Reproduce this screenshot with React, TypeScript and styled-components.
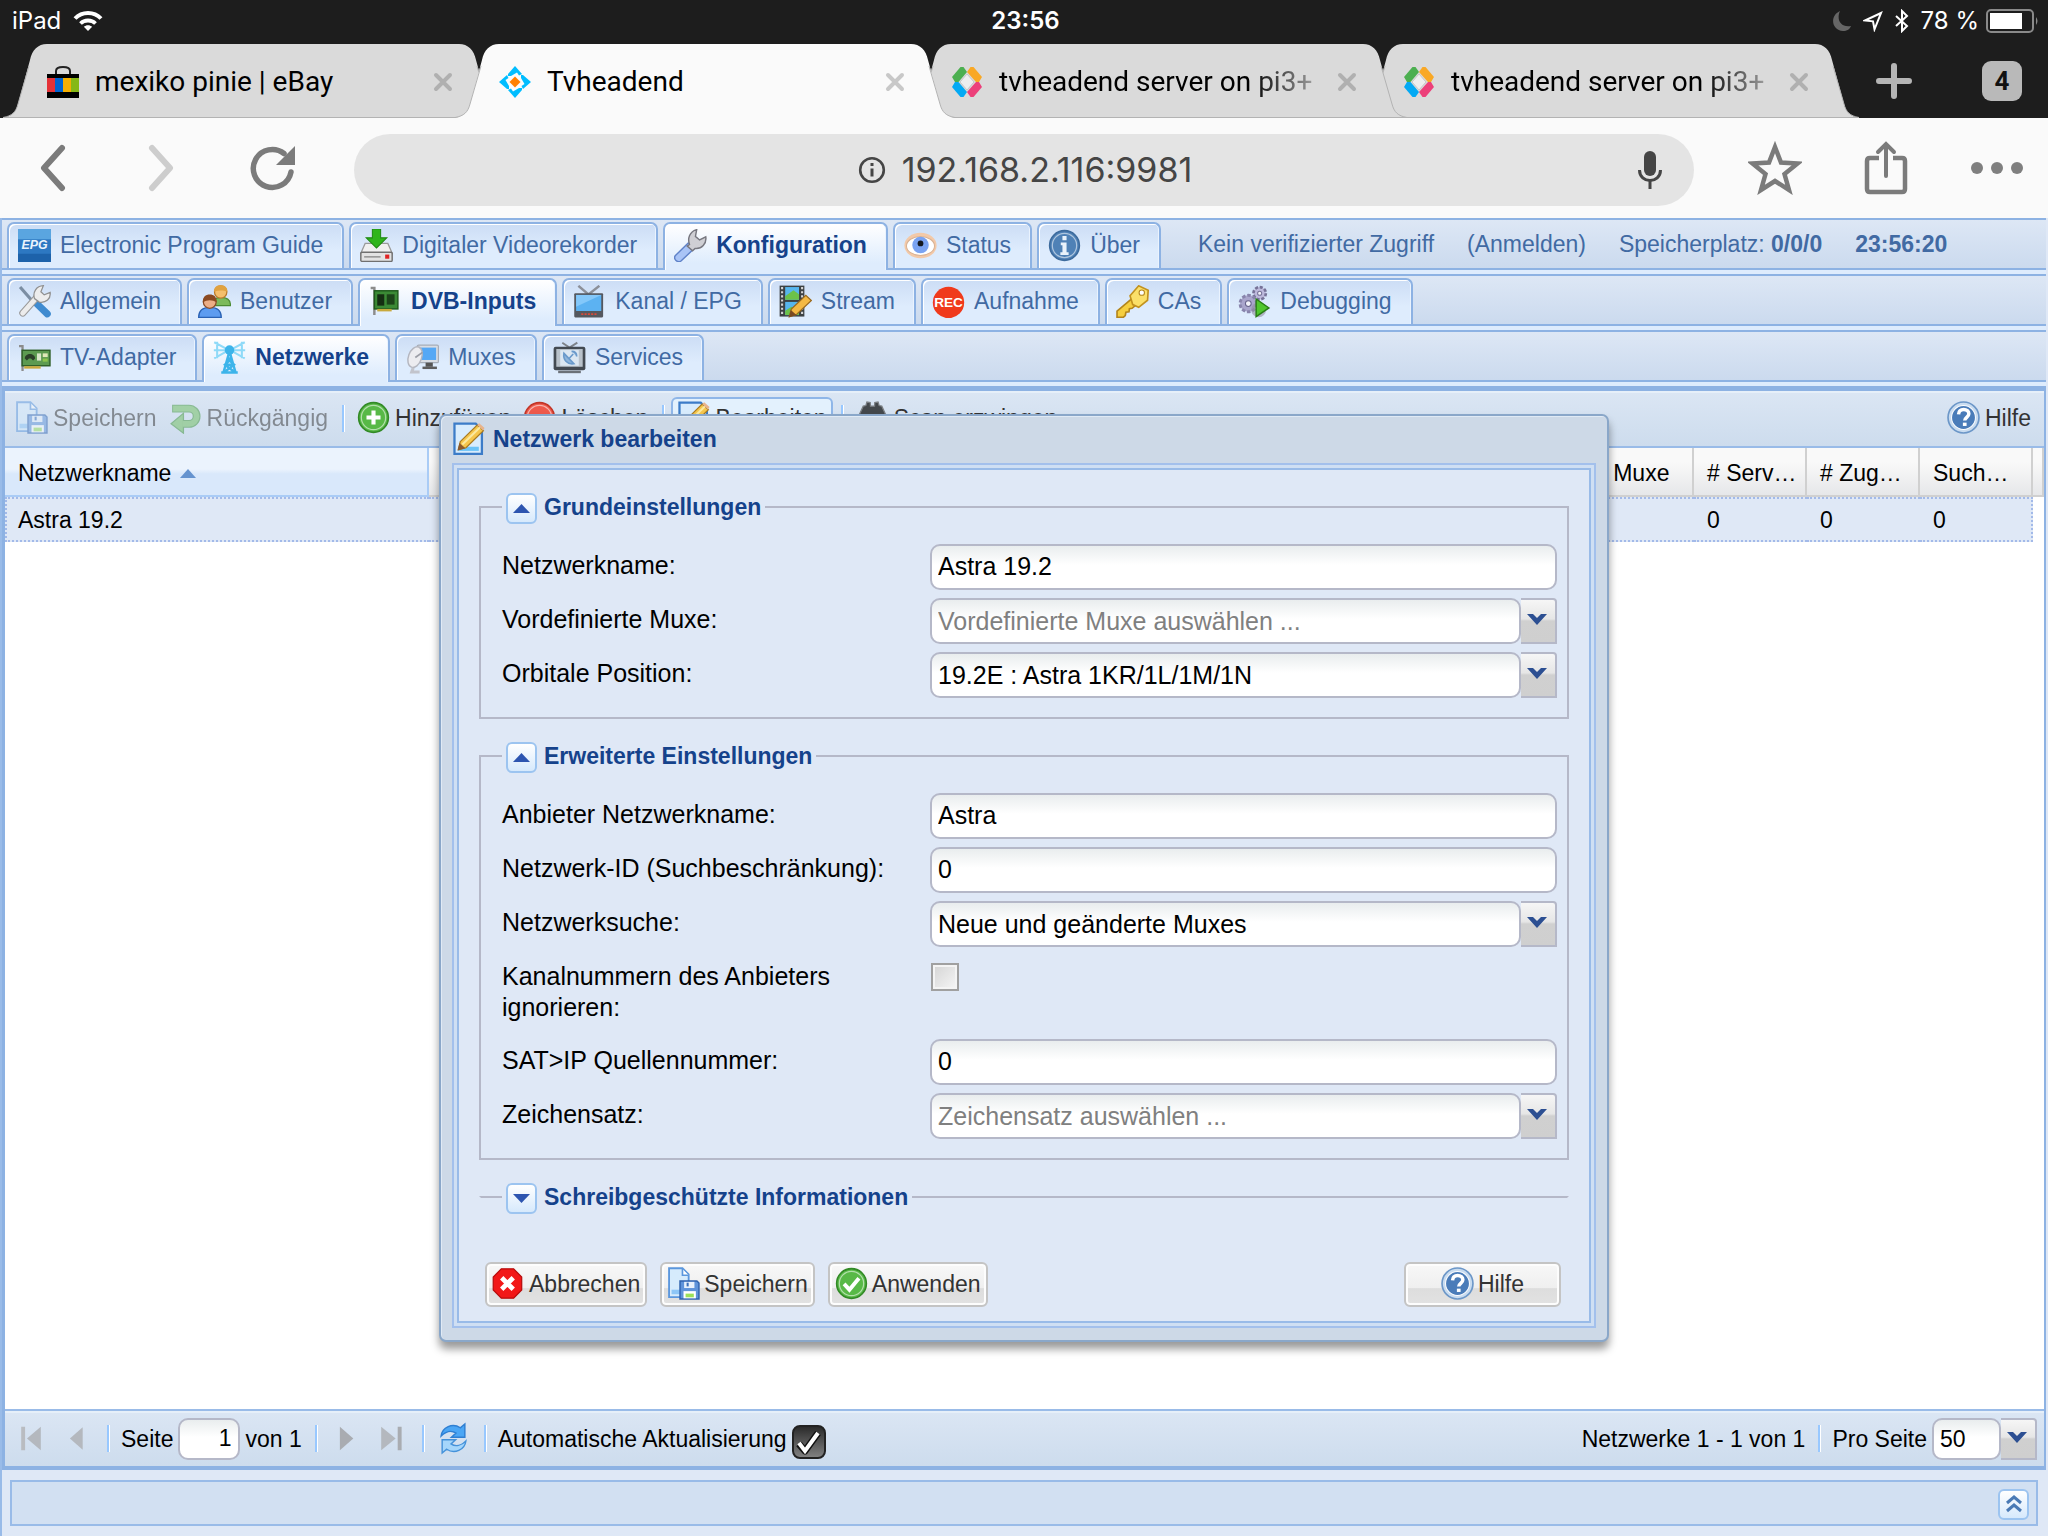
import React, { ReactNode, useId, useState } from "react";
import styled, { createGlobalStyle, css } from "styled-components";

const line = "#8db2e3";
const softLine = "#99bbe8";
const fieldLine = "#b5b8c8";
const navy = "#15428b";

const GlobalStyle = createGlobalStyle`
  *, *::before, *::after { box-sizing: border-box; }
  html, body, #root { height: 100%; }
  body {
    margin: 0;
    background: #dfe8f6;
    color: #000;
    font: 23px/28px "Liberation Sans", Arial, sans-serif;
  }
  button, input, select { font: inherit; color: inherit; margin: 0; }
  button { cursor: pointer; }
  svg { display: block; flex: none; }
`;

/* ---------- icons ---------- */

const disc = (fill: string, ring: string, inner: ReactNode) => (
  <>
    <circle cx="8" cy="8" r="7.2" fill={fill} stroke={ring} strokeWidth="0.8" />
    <circle cx="8" cy="8" r="5.9" fill="none" stroke="#fff" strokeOpacity="0.55" strokeWidth="0.6" />
    {inner}
  </>
);

const floppyPage = (
  <>
    <path d="M1 .6h6.500l3 3v11H1z" fill="#d6ebfc" stroke="#5b97dd" strokeWidth="0.9" />
    <path d="M7.5 1v3h3" fill="#fff" stroke="#5b97dd" strokeWidth="0.8" />
    <path d="M2.2 11h4v2.2h-4z" fill="#8dc6f7" />
    <path d="M6.3 6.8h8.2l1 1v7.7H6.3z" fill="#5f93da" stroke="#2f62ae" strokeWidth="0.7" />
    <path d="M8.3 7.2h5v3h-5z" fill="#e8f1fc" />
    <path d="M9.5 7.6h1v1.8h-1z" fill="#3b6fba" />
    <path d="M8 11.7h6v3.5H8z" fill="#fff" />
    <path d="M9 12.9h4v1.8H9z" fill="#9be05a" />
  </>
);

const pencilPage = (
  <>
    <path d="M1.2 .8h10.300l3 3v11.600H1.200z" fill="#d8ecfd" stroke="#3c7cc8" strokeWidth="1.1" />
    <path d="M3 12h10v2H3z" fill="#6bc3f7" />
    <path d="M4 9.500L12.200 1.500l3 2.700-8.400 8.300-3.600.9z" fill="#f5c64c" stroke="#a87a22" strokeWidth="0.6" />
    <path d="M5 10.900l8.600-8.400" stroke="#fbe9a0" strokeWidth="1" />
    <path d="M2.600 13.800l1-3.600 2.900 2.500z" fill="#8c5a2c" />
    <path d="M12.200 1.500l1-.9 2.600 2.300-.8 1.200z" fill="#e8b48c" />
  </>
);

const art: Record<string, ReactNode> = {
  epg: (
    <>
      <rect width="16" height="16" rx="0.8" fill="#2d78c2" />
      <rect y="0" width="16" height="5" fill="#5aa5e0" />
      <rect y="12" width="16" height="4" fill="#1d62aa" />
      <text x="8" y="9.600" textAnchor="middle" fontSize="6" fontWeight="700" fontStyle="italic" fill="#eaf4fd">EPG</text>
    </>
  ),
  record: (
    <>
      <path d="M2.500 7h11l2.200 5H.3z" fill="#f0f0f0" stroke="#9a9a9a" strokeWidth="0.6" />
      <rect x="0.4" y="11.3" width="15.2" height="4.4" rx="0.6" fill="#e2e2e2" stroke="#707070" strokeWidth="0.7" />
      <path d="M2 13.5h8" stroke="#999" strokeWidth="0.8" />
      <rect x="12.2" y="12.4" width="2" height="2" fill="#e02222" />
      <path d="M6 0h4v4.300h3L8 9.200 3 4.300h3z" fill="#2fb51b" stroke="#1f8a12" strokeWidth="0.5" />
    </>
  ),
  wrench: (
    <>
      <path d="M.7 12.800l6.200-6 2.900 2.700-6.400 6c-1.600 1.200-4-1-2.700-2.700z" fill="#a9c4f6" stroke="#5f82c8" strokeWidth="0.7" />
      <path d="M7.500 7.500c-1-2.900 0-6.200 3.500-7.200l-.6 3.300 2 1.700 3-1.500c.5 3.300-2 6-5.200 5.600l-1.200 1.200-2.600-2.300z" fill="#cfcfd4" stroke="#77777f" strokeWidth="0.7" />
    </>
  ),
  eye: (
    <>
      <ellipse cx="8" cy="8" rx="7.800" ry="6.200" fill="#f3c9a8" />
      <ellipse cx="8" cy="8.200" rx="6.800" ry="4.600" fill="#fff" stroke="#d9b294" strokeWidth="0.5" />
      <circle cx="8" cy="7.800" r="4" fill="#7aa3f2" />
      <circle cx="8" cy="7" r="1.400" fill="#14181f" />
    </>
  ),
  about: disc("#4f81b6", "#3d6b9d", <path d="M7 3.400h2v2H7zM6.200 6.600H9v4.700h1v1.300H6v-1.300h1V7.900h-.8z" fill="#e9f2fb" />),
  tools: (
    <>
      <path d="M1 1l7 8" stroke="#7b8ea3" strokeWidth="1.500" />
      <path d="M9 9l5.200 5" stroke="#3f8bd0" strokeWidth="3.400" strokeLinecap="round" />
      <path d="M2.300 13.600l7-7.800" stroke="#9a9a9a" strokeWidth="3.400" strokeLinecap="round" />
      <path d="M2.300 13.600l7-7.800" stroke="#ececec" strokeWidth="2.400" strokeLinecap="round" />
      <path d="M8 6.600C7 3.400 8.900.5 12.300.3l-1.200 3 1.600 1.500 2.900-1.200c.4 3-2 5.200-5.300 4.700z" fill="#ededed" stroke="#909090" strokeWidth="0.6" />
    </>
  ),
  users: (
    <>
      <path d="M6.800 10c0-2.700 1.500-4 4.400-4s4.600 1.300 4.600 4z" fill="#7cba5c" stroke="#4c8b34" strokeWidth="0.5" />
      <circle cx="11" cy="3.400" r="3" fill="#f4bf6c" stroke="#b9792a" strokeWidth="0.6" />
      <path d="M7.700 3.300C7.700 1 9.100.1 11 .1s3.300.9 3.300 3.200c-2-.9-4.500-.9-6.600 0z" fill="#e0a240" />
      <path d="M.3 15.700c0-3.500 2-4.900 5.500-4.900s5.500 1.400 5.500 4.900z" fill="#5d9cf0" stroke="#2a62b4" strokeWidth="0.6" />
      <circle cx="5.700" cy="8.200" r="3.100" fill="#ecae86" stroke="#8a4b25" strokeWidth="0.6" />
      <path d="M2.300 8.400c0-2.700 1.400-3.800 3.400-3.800s3.400 1.100 3.400 3.800c-2.200-1.300-4.600-1.300-6.800 0z" fill="#8b4a21" />
    </>
  ),
  card: (
    <>
      <path d="M.8 1.500h1.800v13" fill="none" stroke="#8c8c8c" strokeWidth="1.200" />
      <rect x="2.600" y="2.800" width="11.400" height="8.800" fill="#3b8a35" stroke="#1f5a1c" strokeWidth="0.7" />
      <rect x="4" y="4.500" width="3.400" height="5.500" fill="#152e12" />
      <rect x="8.600" y="4.500" width="3.800" height="5" fill="#1c4419" />
      <path d="M4 12.200h7" stroke="#c8a93c" strokeWidth="1.200" />
    </>
  ),
  tvcard: (
    <>
      <path d="M.5 2.500h1.700v12" fill="none" stroke="#8c8c8c" strokeWidth="1.100" />
      <rect x="2" y="4.500" width="13.500" height="7.500" fill="#5c9a50" stroke="#2f5f28" strokeWidth="0.700" />
      <path d="M3.300 8.500c0-3 5-3 5 0l-1 1-1-1h-1l-1 1z" fill="#2b3f28" />
      <rect x="9.200" y="6" width="2" height="3.500" fill="#d8e6c8" />
      <rect x="12" y="6" width="2.400" height="1.800" fill="#dfe8b8" />
      <rect x="12" y="8.500" width="2.400" height="1.500" fill="#8cc44c" />
      <path d="M3 12.800h8" stroke="#c8a93c" strokeWidth="1.200" />
    </>
  ),
  tv: (
    <>
      <path d="M2.600.4L7.500 4.600 12.800.4" fill="none" stroke="#8c9099" strokeWidth="1.200" />
      <rect x=".6" y="4" width="14" height="11.700" rx="0.500" fill="#55585f" />
      <rect x="1.500" y="4.800" width="12.200" height="7.800" fill="#5cb2f2" />
      <path d="M1.500 4.800h12.200L1.500 10.500z" fill="#84c8fa" />
      <path d="M4 14.100h8" stroke="#d84a3a" strokeWidth="0.900" strokeDasharray="1 .6" />
    </>
  ),
  film: (
    <>
      <rect x=".3" y=".3" width="12" height="15" fill="#3d4244" />
      <path d="M1.500 1v14M11.200 1v14" stroke="#d7d7d7" strokeWidth="1" strokeDasharray="1 1" />
      <rect x="3" y="1" width="6.700" height="6.200" fill="#57b6ee" />
      <rect x="3" y="8.200" width="6.700" height="6.400" fill="#57b6ee" />
      <path d="M3 5.500l4-3 2.700 2v2.700H3zM3 12.500l3-2 3.700 2v2.100H3z" fill="#6cc24a" />
      <path d="M6 11.600L13 5l2.700 2.500-7.100 6.700-3.600 1.200z" fill="#f4b944" stroke="#9a6a1f" strokeWidth="0.600" />
      <path d="M4.800 15.600l.9-3.500 2.800 2.500z" fill="#7a4a22" />
    </>
  ),
  rec: (
    <>
      <circle cx="8" cy="8.500" r="7.600" fill="#f03a1c" />
      <text x="8" y="10.900" textAnchor="middle" fontSize="6.600" fontWeight="700" fill="#fff">REC</text>
    </>
  ),
  key: (
    <>
      <path d="M8 6.400l2.600 2.600-2.800 2.300-1.300.2-.2 1.500-1.500.2-.3 1.600-1 .9H.5v-3z" fill="#f6cf3f" stroke="#b3851c" strokeWidth="0.800" />
      <path d="M6.800 5.200L11 .4l4.600 2.200-.3 4.800-4.300 3.400-2.900-1.300z" fill="#fbe069" stroke="#c2921f" strokeWidth="0.800" />
      <circle cx="12.500" cy="3.700" r="1.300" fill="#fff" stroke="#b3851c" strokeWidth="0.500" />
    </>
  ),
  gears: (
    <>
      <circle cx="10.500" cy="4" r="3" fill="#bdb9dc" stroke="#777398" strokeWidth="1.300" strokeDasharray="1.500 .8" />
      <circle cx="10.500" cy="4" r="1" fill="#f2f2fa" stroke="#777398" strokeWidth="0.500" />
      <circle cx="5" cy="9" r="4" fill="#a9a5cc" stroke="#8884ac" strokeWidth="1.400" strokeDasharray="1.700 .9" />
      <circle cx="5" cy="9" r="1.400" fill="#f2f2fa" stroke="#66628a" strokeWidth="0.500" />
      <circle cx="10" cy="12" r="3.600" fill="#8f8c9e" opacity="0.600" />
      <path d="M8.800 6.800l6.200 4.300-6.200 4.200z" fill="#4fc62d" stroke="#2a7d16" strokeWidth="0.700" />
    </>
  ),
  mast: (
    <>
      <path d="M.6.600l6 3.200M.4 4.500h6M.6 8.400l6-3.400M2 .4v8M15.400.600l-6 3.200M15.600 4.500h-6M15.400 8.400l-6-3.400M14 .4v8" fill="none" stroke="#8fdaf8" strokeWidth="1" />
      <path d="M8 5L5 15.500M8 5l3 10.500M6.800 8.500h2.600M6.200 11.500h3.800M4 15.300h8M7 8.500l3.200 3-4.800 3.700M9 8.500l-3.200 3 4.800 3.700" fill="none" stroke="#3cb4ea" strokeWidth="1.200" />
      <circle cx="8" cy="4.400" r="2.300" fill="#3cb4ea" />
    </>
  ),
  dish: (
    <>
      <rect x="5.500" y="2" width="10.200" height="8.500" rx="0.600" fill="#d9dde3" stroke="#a6adb8" strokeWidth="0.600" />
      <rect x="7" y="3.200" width="7.600" height="6" fill="#55a8f5" />
      <path d="M9.500 10.500h3.500v2H9.500z" fill="#555" />
      <path d="M8 13h7" stroke="#5d5d5d" strokeWidth="1.200" />
      <ellipse cx="4.400" cy="7.800" rx="3.200" ry="5.200" transform="rotate(20 4.400 7.800)" fill="#ececf0" stroke="#b4b6bf" strokeWidth="0.700" />
      <path d="M4.500 8l3.500-2.500" stroke="#9b9da6" strokeWidth="0.800" />
      <path d="M3.500 13l-.7 2h3.800" fill="none" stroke="#c2c4cc" strokeWidth="1.500" />
    </>
  ),
  satset: (
    <>
      <path d="M4.500.8L8 3.200l3.800-2.400" fill="none" stroke="#7d8289" strokeWidth="0.900" />
      <rect x=".3" y="2.800" width="15.400" height="11.400" rx="1" fill="#434a52" />
      <rect x="1.600" y="3.900" width="12.800" height="8.600" fill="#b9c2cb" />
      <rect x="3.500" y="4.400" width="9" height="7.600" fill="#dbe7f2" />
      <path d="M5.300 6c-.5 3 1.500 5.500 4.800 5zM7.800 8.500l2-2.200M9 5c1.500 0 2.500 1 2.500 2.500" fill="#8eb5dc" stroke="#6a9acb" strokeWidth="0.800" />
      <path d="M2.500 15h11" stroke="#6b7178" strokeWidth="1.200" />
    </>
  ),
  save: floppyPage,
  undo: (
    <>
      <path d="M1.500 3.700h8.200a3.700 3.700 0 0 1 0 7.400H6.500" fill="none" stroke="#3e9338" strokeWidth="3.800" />
      <path d="M7 6v9.600L1 11z" fill="#6fbf5d" stroke="#3e9338" strokeWidth="0.600" />
      <path d="M2 3.700h7.700a3.700 3.700 0 0 1 0 7.400H6.500" fill="none" stroke="#6fbf5d" strokeWidth="2.700" />
    </>
  ),
  add: disc("#58b947", "#328a26", <path d="M7 4.600h2V7h2.400v2H9v2.400H7V9H4.600V7H7z" fill="#fff" />),
  remove: disc("#ee5a4c", "#c23527", <path d="M4.200 7h7.600v2H4.200z" fill="#fff" />),
  edit: pencilPage,
  scan: (
    <path d="M1 15V8l2.500-5.500 1.300-.3.500-1.700 1.600.2.100 1.800h2L9.100.7l1.600-.2.500 1.700 1.300.3L15 8v7h-5V9H6v6z" fill="#44484c" stroke="#7b7f83" strokeWidth="0.600" />
  ),
  help: (
    <>
      <circle cx="8" cy="8" r="7.500" fill="#c9dcf0" stroke="#6c97c8" strokeWidth="0.800" />
      <circle cx="8" cy="8" r="5.800" fill="#4a7cb9" stroke="#fff" strokeWidth="0.500" />
      <path d="M5.600 6.500C5.700 4.900 6.700 4.100 8.100 4.100c1.400 0 2.500.8 2.500 2.100 0 1.700-2 1.800-2 3.300" fill="none" stroke="#fff" strokeWidth="1.700" />
      <rect x="7.700" y="10.500" width="1.800" height="1.600" fill="#fff" />
    </>
  ),
  cancel: (
    <>
      <path d="M4.500.9h6l3.900 4v6.200l-3.900 4h-6l-3.900-4V4.900z" fill="#f21818" stroke="#b80d0d" strokeWidth="0.600" />
      <path d="M4.700 5.200l5.600 5.600M10.300 5.200l-5.600 5.600" stroke="#fff" strokeWidth="2.300" />
    </>
  ),
  apply: disc("#58b947", "#328a26", <path d="M4.400 8.200l2.600 2.800 4.600-5.500" fill="none" stroke="#fff" strokeWidth="1.900" />),
  first: (
    <>
      <rect x="3" y="2.300" width="1.900" height="11.400" fill="#b9bcc1" />
      <path d="M12.500 2.300v11.400L5.800 8z" fill="#b4b8be" />
    </>
  ),
  prev: <path d="M11 2.500v11L4.800 8z" fill="#b4b8be" />,
  next: <path d="M4.800 2.300v11.400L11.300 8z" fill="#a9acb1" />,
  last: (
    <>
      <path d="M3 2.300v11.400L10 8z" fill="#b4b8be" />
      <rect x="11" y="2.300" width="1.900" height="11.400" fill="#a9acb1" />
    </>
  ),
  refresh: (
    <>
      <path d="M2 6.800C2.500 2.500 7.500.2 11.300 2.800L13.500 1v6.400H7l2.200-2C7 3.800 4.200 4.600 2 6.800z" fill="#4aa6f5" stroke="#2f7fd2" strokeWidth="0.700" />
      <path d="M14 9.200c-.5 4.300-5.500 6.600-9.300 4L2.500 15V8.600H9l-2.200 2c2.200 1.600 5 .8 7.200-1.400z" fill="#a5d6fb" stroke="#4592da" strokeWidth="0.700" />
    </>
  ),
};

const Icon = ({ name, size = 33 }: { name: string; size?: number }) => (
  <svg width={size} height={size} viewBox="0 0 16 16" aria-hidden="true" fontFamily="Liberation Sans, sans-serif">
    {art[name]}
  </svg>
);

/* ---------- device status bar ---------- */

const Screen = styled.div`
  display: flex;
  flex-direction: column;
  min-height: 100vh;
`;

const StatusBar = styled.header`
  display: grid;
  grid-template-columns: 1fr auto 1fr;
  align-items: center;
  height: 44px;
  padding: 0 9px 3px 12px;
  background: #1d1d1d;
  color: #fff;
  font: 24px/40px Inter, sans-serif;
`;

const StatusGroup = styled.div<{ $end?: boolean }>`
  display: flex;
  align-items: center;
  gap: 12px;
  justify-content: ${(p) => (p.$end ? "flex-end" : "flex-start")};
`;

const Battery = styled.span`
  display: flex;
  align-items: center;
  gap: 7px;
`;

const DeviceClock = styled.span`
  font-weight: 600;
`;

/* ---------- browser tabs ---------- */

const TabStrip = styled.nav`
  display: flex;
  align-items: flex-start;
  height: 74px;
  padding-left: 3px;
  background: #1d1d1d;
`;

const PageTab = styled.div<{ $active?: boolean; $level: number }>`
  display: flex;
  flex: 0 1 500px;
  min-width: 0;
  margin-right: -48px;
  position: relative;
  z-index: ${(p) => p.$level};
  color: ${(p) => (p.$active ? "#fafafa" : "#dadada")};
  font: 28px/36px Roboto, sans-serif;
`;

const PageTabBody = styled.div<{ $active?: boolean }>`
  display: flex;
  flex: 1;
  min-width: 0;
  align-items: center;
  gap: 16px;
  height: 74px;
  padding: 2px 6px 0 0;
  background: currentColor;
  border-bottom: 1px solid ${(p) => (p.$active ? "#fafafa" : "#b3b3b3")};
`;

const PageTitle = styled.a<{ $fade?: boolean }>`
  flex: 1;
  min-width: 0;
  overflow: hidden;
  white-space: nowrap;
  color: #000;
  text-decoration: none;
  ${(p) =>
    p.$fade &&
    css`
      mask-image: linear-gradient(to right, #000 78%, rgba(0, 0, 0, 0.2) 100%);
    `}
`;

const BareButton = styled.button`
  display: inline-flex;
  align-items: center;
  justify-content: center;
  padding: 0;
  border: 0;
  background: none;
`;

const StripTools = styled.div`
  display: flex;
  flex: 1;
  align-items: center;
  justify-content: space-between;
  height: 74px;
  padding: 0 26px 0 65px;
`;

const TabCount = styled.button`
  width: 40px;
  height: 40px;
  padding: 0;
  border: 0;
  border-radius: 9px;
  background: #b9b9b9;
  color: #111;
  font: 700 26px/40px Roboto, sans-serif;
`;

const Edge = ({ right, active }: { right?: boolean; active?: boolean }) => (
  <svg width="44" height="74" viewBox="0 0 44 74" aria-hidden="true">
    <g transform={right ? "translate(44 0) scale(-1 1)" : undefined}>
      <path d="M0 74C9 72 13 68 15 60L27 16C29 6 35 0 44 0V74z" fill="currentColor" />
      <path d="M0 73.500C9 72 13 68 15 60L26 22" fill="none" stroke="#b3b3b3" strokeWidth="1" />
      {!active && <path d="M0 73.500H44" stroke="#b3b3b3" strokeWidth="1" />}
    </g>
  </svg>
);

const BagMark = () => (
  <svg width="32" height="32" viewBox="0 0 32 32" aria-hidden="true">
    <path d="M9 9V5q0-4 7-4t7 4v4" fill="none" stroke="#222" strokeWidth="2" />
    <path d="M0 8h32v24H0z" fill="#000" />
    <path d="M0 12h8v14H0z" fill="#e53238" />
    <path d="M8 12h8v14H8z" fill="#0064d2" />
    <path d="M16 12h8v14h-8z" fill="#f5af02" />
    <path d="M24 12h8v14h-8z" fill="#86b817" />
  </svg>
);

const HeadendMark = () => (
  <svg width="32" height="32" viewBox="0 0 32 32" aria-hidden="true">
    <path d="M16 0l7 8-3 1.500-2-3-6 3.500H9V8zM32 16l-8 7-1.500-3 3-2-3.500-6V9h2zM16 32l-7-8 3-1.500 2 3 6-3.500h3v2zM0 16l8-7 1.500 3-3 2 3.500 6v3H8z" fill="#00bdff" />
    <path d="M16 10.500l5.500 5.500-5.500 5.500-5.500-5.500z" fill="#ff7f00" />
  </svg>
);

const KodiMark = () => (
  <svg width="32" height="32" viewBox="0 0 32 32" aria-hidden="true">
    <path d="M16 8l7 8-7 8-7-8z" fill="#eee" stroke="#c8c8c8" />
    <path d="M9.500 1h3l3.500 5-8.500 10H4l-3-5z" fill="#4caf50" />
    <path d="M19.500 1h3L31 11l-3 5h-3L16 6z" fill="#f9a825" />
    <path d="M4 16h3.500L16 26l-3.500 5h-3L1 21z" fill="#03a9f4" />
    <path d="M28 16h-3L16 26l3.500 5h3L31 21z" fill="#ec407a" />
  </svg>
);

const pageTabs = [
  { title: "mexiko pinie | eBay", mark: <BagMark />, level: 1 },
  { title: "Tvheadend", mark: <HeadendMark />, level: 5, active: true },
  { title: "tvheadend server on pi3+", mark: <KodiMark />, level: 3, fade: true },
  { title: "tvheadend server on pi3+", mark: <KodiMark />, level: 2, fade: true },
];

const BrowserTabs = () => (
  <TabStrip aria-label="Tabs">
    {pageTabs.map((t, i) => (
      <PageTab key={i} $active={t.active} $level={t.level}>
        <Edge active={t.active} />
        <PageTabBody $active={t.active}>
          {t.mark}
          <PageTitle href="#" $fade={t.fade}>{t.title}</PageTitle>
          <BareButton aria-label="Tab schließen">
            <svg width="20" height="20" viewBox="0 0 20 20">
              <path d="M3 3l14 14M17 3L3 17" stroke={t.active ? "#c8c8c8" : "#b0b0b0"} strokeWidth="4" strokeLinecap="round" />
            </svg>
          </BareButton>
        </PageTabBody>
        <Edge right active={t.active} />
      </PageTab>
    ))}
    <StripTools>
      <BareButton aria-label="Neuer Tab">
        <svg width="36" height="36" viewBox="0 0 36 36">
          <path d="M18 3v30M3 18h30" stroke="#b5b5b5" strokeWidth="6" strokeLinecap="round" />
        </svg>
      </BareButton>
      <TabCount aria-label="4 Tabs">4</TabCount>
    </StripTools>
  </TabStrip>
);

/* ---------- address bar ---------- */

const BrowserBar = styled.div`
  display: flex;
  align-items: center;
  height: 100px;
  padding: 0 24px 0 32px;
  background: #fafafa;
`;

const NavButtons = styled.div`
  display: flex;
  gap: 69px;
  width: 322px;
`;

const Omnibox = styled.div`
  display: flex;
  flex: 1;
  align-items: center;
  justify-content: center;
  height: 72px;
  margin-top: 4px;
  padding: 0 32px 0 58px;
  border-radius: 36px;
  background: #e4e4e4;
  color: #454545;
`;

const Address = styled.div`
  display: flex;
  flex: 1;
  align-items: center;
  justify-content: center;
  gap: 16px;
  font: 34px/40px Inter, sans-serif;
`;

const ActionButtons = styled.div`
  display: flex;
  align-items: center;
  gap: 62px;
  margin-left: 54px;
`;

const AddressBar = () => (
  <BrowserBar>
    <NavButtons>
      <BareButton aria-label="Zurück">
        <svg width="40" height="48" viewBox="0 0 40 48">
          <path d="M30 4L12 24l18 20" fill="none" stroke="#7b7b7b" strokeWidth="6" strokeLinecap="round" strokeLinejoin="round" />
        </svg>
      </BareButton>
      <BareButton aria-label="Vorwärts">
        <svg width="40" height="48" viewBox="0 0 40 48">
          <path d="M11 4l18 20-18 20" fill="none" stroke="#cdcdcd" strokeWidth="6" strokeLinecap="round" strokeLinejoin="round" />
        </svg>
      </BareButton>
      <BareButton aria-label="Neu laden">
        <svg width="46" height="48" viewBox="0 0 46 48">
          <path d="M41 28A19 19 0 1 1 34 9.500" fill="none" stroke="#7b7b7b" strokeWidth="5.500" strokeLinecap="round" />
          <path d="M45 2v19H26z" fill="#7b7b7b" />
        </svg>
      </BareButton>
    </NavButtons>
    <Omnibox>
      <Address>
        <svg width="28" height="28" viewBox="0 0 28 28" aria-hidden="true">
          <circle cx="14" cy="14" r="11.800" fill="none" stroke="#454545" strokeWidth="2.600" />
          <path d="M14 12.500v8M14 7v3" stroke="#454545" strokeWidth="3" />
        </svg>
        <span>192.168.2.116:9981</span>
      </Address>
      <BareButton aria-label="Spracheingabe">
        <svg width="24" height="38" viewBox="0 0 24 38">
          <rect x="6" y="0" width="12" height="25" rx="6" fill="#454545" />
          <path d="M1.500 19c0 14 21 14 21 0M12 30v8" fill="none" stroke="#454545" strokeWidth="3" />
        </svg>
      </BareButton>
    </Omnibox>
    <ActionButtons>
      <BareButton aria-label="Lesezeichen">
        <svg width="54" height="54" viewBox="0 0 54 54">
          <path d="M27 6l6 15.500 16.500 1-13 10.500 4.500 16L27 40 13 49l4.500-16-13-10.500 16.500-1z" fill="none" stroke="#7b7b7b" strokeWidth="4.500" />
        </svg>
      </BareButton>
      <BareButton aria-label="Teilen">
        <svg width="44" height="54" viewBox="0 0 44 54">
          <path d="M15 17H6q-3 0-3 3v28q0 3 3 3h32q3 0 3-3V20q0-3-3-3h-9" fill="none" stroke="#7b7b7b" strokeWidth="4.500" />
          <path d="M22 35V4M14 11l8-8 8 8" fill="none" stroke="#7b7b7b" strokeWidth="4" strokeLinecap="round" />
        </svg>
      </BareButton>
      <BareButton aria-label="Menü">
        <svg width="54" height="14" viewBox="0 0 54 14">
          <circle cx="7" cy="7" r="6" fill="#7f7f7f" />
          <circle cx="27" cy="7" r="6" fill="#7f7f7f" />
          <circle cx="47" cy="7" r="6" fill="#7f7f7f" />
        </svg>
      </BareButton>
    </ActionButtons>
  </BrowserBar>
);

/* ---------- application tabs ---------- */

const AppPage = styled.main`
  position: relative;
  display: flex;
  flex: 1;
  flex-direction: column;
  border: solid ${softLine};
  border-width: 0 2px;
  border-right-color: #dfe8f6;
`;

const Strip = styled.div`
  border-top: 2px solid ${line};
  border-bottom: 4px solid #deecfd;
`;

const StripInner = styled.div`
  display: flex;
  align-items: flex-start;
  gap: 5px;
  height: 50px;
  padding: 2px 5px 0;
  border-bottom: 2px solid ${line};
  background: linear-gradient(#dde7f5, #cbdaee);
`;

const AppTab = styled.button<{ $active?: boolean }>`
  display: inline-flex;
  align-items: center;
  gap: 9px;
  height: ${(p) => (p.$active ? 48 : 46)}px;
  padding: ${(p) => (p.$active ? "0 19px 4px 9px" : "0 19px 2px 9px")};
  border: 2px solid ${line};
  border-bottom: 0;
  border-radius: 7px 7px 0 0;
  background: ${(p) =>
    p.$active ? "linear-gradient(#ffffff, #deecfd 85%)" : "linear-gradient(#ccddf5, #deecfd 60%)"};
  box-shadow: inset 2px 2px 0 -1px #fff, inset -1px 0 0 #eaf3fe;
  color: ${(p) => (p.$active ? navy : "#416aa3")};
  font-weight: ${(p) => (p.$active ? 700 : 400)};
  white-space: nowrap;
`;

const SessionInfo = styled.div`
  display: flex;
  gap: 33px;
  padding: 8px 0 0 32px;
  color: #416aa3;
  white-space: nowrap;
`;

const SessionLink = styled.a`
  color: inherit;
  text-decoration: none;
`;

type TabDef = { label: string; icon: string; active?: boolean };

const TabRow = ({ tabs, label, children }: { tabs: TabDef[]; label: string; children?: ReactNode }) => (
  <Strip>
    <StripInner role="tablist" aria-label={label}>
      {tabs.map((t) => (
        <AppTab key={t.label} role="tab" aria-selected={!!t.active} $active={t.active}>
          <Icon name={t.icon} />
          {t.label}
        </AppTab>
      ))}
      {children}
    </StripInner>
  </Strip>
);

const mainTabs: TabDef[] = [
  { label: "Electronic Program Guide", icon: "epg" },
  { label: "Digitaler Videorekorder", icon: "record" },
  { label: "Konfiguration", icon: "wrench", active: true },
  { label: "Status", icon: "eye" },
  { label: "Über", icon: "about" },
];

const configTabs: TabDef[] = [
  { label: "Allgemein", icon: "tools" },
  { label: "Benutzer", icon: "users" },
  { label: "DVB-Inputs", icon: "card", active: true },
  { label: "Kanal / EPG", icon: "tv" },
  { label: "Stream", icon: "film" },
  { label: "Aufnahme", icon: "rec" },
  { label: "CAs", icon: "key" },
  { label: "Debugging", icon: "gears" },
];

const inputTabs: TabDef[] = [
  { label: "TV-Adapter", icon: "tvcard" },
  { label: "Netzwerke", icon: "mast", active: true },
  { label: "Muxes", icon: "dish" },
  { label: "Services", icon: "satset" },
];

/* ---------- grid panel ---------- */

const Panel = styled.section`
  display: flex;
  flex: 1;
  flex-direction: column;
  border: solid ${line};
  border-width: 5px 2px 4px 3px;
  background: #fff;
`;

const Bar = styled.div<{ $foot?: boolean }>`
  display: flex;
  align-items: center;
  height: 57px;
  padding: 0 7px 0 4px;
  border: 0 solid ${softLine};
  border-width: ${(p) => (p.$foot ? "2px 0 0" : "0 0 2px")};
  background: linear-gradient(#dbe6f4, #cddced);
  box-shadow: inset 0 2px 0 #e6eff9;
  white-space: nowrap;
`;

const BarButton = styled.button<{ $hot?: boolean }>`
  display: inline-flex;
  align-items: center;
  gap: 5px;
  height: 43px;
  padding: 0 4px 2px;
  border: 2px solid ${(p) => (p.$hot ? "#8fb6e8" : "transparent")};
  border-radius: 6px;
  background: ${(p) => (p.$hot ? "#e3f1fd" : "none")};
  color: #333;
  &:disabled {
    opacity: 0.5;
  }
`;

const Divider = styled.span`
  width: 3px;
  height: 27px;
  margin: 0 6px 0 8px;
  border-left: 2px solid #98c8ff;
  border-right: 1px solid #fff;
`;

const Spacer = styled.span`
  flex: 1;
`;

const Grid = styled.table`
  width: 100%;
  table-layout: fixed;
  border-spacing: 0;
`;

const FirstCol = styled.col`
  width: 424px;
`;
const CountCol = styled.col`
  width: 113px;
`;
const EndCol = styled.col`
  width: 11px;
`;

const HeadCell = styled.th<{ $sorted?: boolean }>`
  height: 49px;
  padding: 3px 0 0 13px;
  border-right: 2px solid ${(p) => (p.$sorted ? "#aaccf6" : "#d0d0d0")};
  border-bottom: 2px solid ${(p) => (p.$sorted ? "#aaccf6" : "#d0d0d0")};
  background: ${(p) =>
    p.$sorted ? "linear-gradient(#ebf3fd 45%, #d9e8fb 55%)" : "linear-gradient(#f9f9f9 30%, #e6e7e9)"};
  font-weight: 400;
  text-align: left;
  white-space: nowrap;
`;

const SortLabel = styled.span`
  display: flex;
  align-items: center;
  gap: 9px;
`;

const Cell = styled.td<{ $first?: boolean; $last?: boolean }>`
  height: 45px;
  padding: 0 ${(p) => (p.$first ? 11 : 13)}px;
  border: 2px dotted #a3bae9;
  border-left-width: ${(p) => (p.$first ? 2 : 0)}px;
  border-right-width: ${(p) => (p.$last ? 2 : 0)}px;
  background: #dfe8f6;
`;

const Message = styled.span`
  padding: 0 5px;
`;

const PagerButton = styled.button`
  display: inline-flex;
  align-items: center;
  justify-content: center;
  width: 45px;
  height: 43px;
  padding: 0;
  border: 0;
  background: none;
`;

const fieldFace = css`
  border: 2px solid ${fieldLine};
  border-radius: 10px;
  background: linear-gradient(#e9edee, #ffffff 45%);
`;

const PageNumber = styled.input`
  width: 62px;
  height: 42px;
  padding: 0 7px;
  ${fieldFace}
  text-align: right;
`;

const RefreshToggle = styled.span`
  display: grid;
  width: 33px;
  height: 34px;
  margin-top: 6px;
  > * {
    grid-area: 1 / 1;
  }
  > svg {
    pointer-events: none;
  }
`;

const DarkCheck = styled.input`
  appearance: none;
  width: 34px;
  height: 34px;
  border: 2px solid #222;
  border-radius: 8px;
  background: linear-gradient(#2b2b2b, #808080);
`;

/* ---------- combo box ---------- */

const ComboWrap = styled.span<{ $compact?: boolean }>`
  display: grid;
  grid-template-columns: 1fr 36px;
  width: ${(p) => (p.$compact ? "105px" : "100%")};
  height: ${(p) => (p.$compact ? 42 : 46)}px;
`;

const ComboFace = styled.span`
  grid-area: 1 / 1;
  ${fieldFace}
`;

const ComboArrow = styled.span`
  grid-area: 1 / 2;
  display: flex;
  align-items: center;
  justify-content: center;
  padding: 0 2px 3px 0;
  border: solid ${fieldLine};
  border-width: 2px 2px 2px 0;
  border-radius: 0 4px 0 0;
  background: linear-gradient(#f6f6f6, #e6e6e6 45%, #d0d0d0 50%, #cfcfcf);
`;

const ComboSelect = styled.select<{ $empty?: boolean }>`
  grid-area: 1 / 1 / 2 / 3;
  appearance: none;
  width: 100%;
  padding: 0 44px 0 8px;
  border: 0;
  background: none;
  color: ${(p) => (p.$empty ? "#808080" : "#000")};
`;

type ComboProps = { id: string; value: string; empty?: boolean; compact?: boolean };

const Combo = ({ id, value, empty, compact }: ComboProps) => (
  <ComboWrap $compact={compact}>
    <ComboFace />
    <ComboArrow>
      <svg width="20" height="13" viewBox="0 0 20 13" aria-hidden="true">
        <path d="M0 1h6l4 4 4-4h6L10 12z" fill="#2c4f92" />
      </svg>
    </ComboArrow>
    <ComboSelect id={id} $empty={empty} defaultValue={value}>
      <option>{value}</option>
    </ComboSelect>
  </ComboWrap>
);

/* ---------- dialog ---------- */

const Overlay = styled.div`
  position: absolute;
  inset: 0;
  display: grid;
  place-items: center;
  padding-top: 2px;
`;

const Dialog = styled.section`
  width: min(1170px, 100%);
  padding: 0 11px 12px;
  border: 2px solid #8aa7c9;
  border-radius: 7px;
  background: #cdd9e7;
  box-shadow: inset 1px 1px 0 #e0eaf5, 0 7px 9px rgba(0, 0, 0, 0.4);
`;

const DialogTitle = styled.h1`
  display: flex;
  align-items: center;
  gap: 8px;
  height: 47px;
  margin: 0;
  padding-bottom: 2px;
  color: ${navy};
  font-size: 23px;
  line-height: 28px;
`;

const Frame = styled.div`
  padding: 3px;
  border: 2px solid #a3c0ec;
  background: #cfdff3;
`;

const Form = styled.form`
  padding: 20px 20px 14px;
  border: 2px solid ${softLine};
  background: #dfe8f6;
`;

const Group = styled.fieldset<{ $closed?: boolean }>`
  min-width: 0;
  margin: 0 0 ${(p) => (p.$closed ? 48 : 20)}px;
  padding: ${(p) => (p.$closed ? "0 10px 0 21px" : "20px 10px 19px 21px")};
  border: 2px solid ${fieldLine};
  ${(p) =>
    p.$closed &&
    css`
      border-color: ${fieldLine} transparent transparent;
      border-bottom: 0;
    `}
`;

const GroupTitle = styled.legend`
  display: flex;
  align-items: flex-end;
  gap: 7px;
  height: 34px;
  padding: 0 4px;
  color: ${navy};
  font-weight: 700;
  line-height: 34px;
`;

const Toggle = styled.button`
  display: inline-flex;
  align-items: center;
  justify-content: center;
  width: 31px;
  height: 31px;
  padding: 0;
  border: 2px solid #9cc4f0;
  border-radius: 6px;
  background: linear-gradient(#ffffff, #d6e9fc);
`;

const Rows = styled.div`
  display: grid;
  gap: 8px;
`;

const FieldRow = styled.div`
  display: grid;
  grid-template-columns: 428px 1fr;
  align-items: start;
  font-size: 25px;
`;

const FieldLabel = styled.label`
  padding: 6px 20px 8px 0;
  line-height: 31px;
`;

const TextBox = styled.input`
  width: 100%;
  height: 46px;
  padding: 0 6px 2px;
  ${fieldFace}
`;

const TickBox = styled.input`
  appearance: none;
  width: 28px;
  height: 28px;
  margin: 8px 1px;
  border: 2px solid #a0a0a0;
  background: linear-gradient(135deg, #d4d4d4, #f6f6f6);
  box-shadow: inset 0 0 0 2px #f4f4f4;
`;

const Actions = styled.div`
  display: flex;
  align-items: center;
  gap: 13px;
  padding: 0 8px 0 6px;
`;

const ActionButton = styled.button<{ $wide?: boolean }>`
  display: inline-flex;
  align-items: center;
  justify-content: center;
  gap: 4px;
  min-width: ${(p) => (p.$wide ? 157 : 0)}px;
  height: 45px;
  padding: 0 5px 2px;
  border: 2px solid #c4c4c4;
  border-radius: 6px;
  background: linear-gradient(#f8f8f8, #efefef 58%, #dddddd 60%, #e2e2e2);
  box-shadow: inset 0 0 0 2px #fdfdfd;
  color: #333;
`;

const Section = ({ title, closed, children }: { title: string; closed?: boolean; children?: ReactNode }) => (
  <Group $closed={closed}>
    <GroupTitle>
      <Toggle type="button" aria-label={title} aria-expanded={!closed}>
        <svg width="17" height="9" viewBox="0 0 17 9" aria-hidden="true">
          <path d={closed ? "M0 0h17L8.500 9z" : "M0 9h17L8.500 0z"} fill="#2d55b0" />
        </svg>
      </Toggle>
      {title}
    </GroupTitle>
    {children && <Rows>{children}</Rows>}
  </Group>
);

type FieldProps = { label: string; value?: string; kind?: "text" | "combo" | "tick"; empty?: boolean };

const Field = ({ label, value = "", kind = "text", empty }: FieldProps) => {
  const id = useId();
  return (
    <FieldRow>
      <FieldLabel htmlFor={id}>{label}</FieldLabel>
      {kind === "text" && <TextBox id={id} defaultValue={value} />}
      {kind === "combo" && <Combo id={id} value={value} empty={empty} />}
      {kind === "tick" && <TickBox id={id} type="checkbox" />}
    </FieldRow>
  );
};

const NetworkDialog = () => (
  <Overlay>
    <Dialog role="dialog" aria-labelledby="dialog-title">
      <DialogTitle id="dialog-title">
        <Icon name="edit" />
        Netzwerk bearbeiten
      </DialogTitle>
      <Frame>
        <Form onSubmit={(e) => e.preventDefault()}>
          <Section title="Grundeinstellungen">
            <Field label="Netzwerkname:" value="Astra 19.2" />
            <Field label="Vordefinierte Muxe:" kind="combo" value="Vordefinierte Muxe auswählen ..." empty />
            <Field label="Orbitale Position:" kind="combo" value="19.2E : Astra 1KR/1L/1M/1N" />
          </Section>
          <Section title="Erweiterte Einstellungen">
            <Field label="Anbieter Netzwerkname:" value="Astra" />
            <Field label="Netzwerk-ID (Suchbeschränkung):" value="0" />
            <Field label="Netzwerksuche:" kind="combo" value="Neue und geänderte Muxes" />
            <Field label="Kanalnummern des Anbieters ignorieren:" kind="tick" />
            <Field label="SAT>IP Quellennummer:" value="0" />
            <Field label="Zeichensatz:" kind="combo" value="Zeichensatz auswählen ..." empty />
          </Section>
          <Section title="Schreibgeschützte Informationen" closed />
          <Actions>
            <ActionButton type="button"><Icon name="cancel" />Abbrechen</ActionButton>
            <ActionButton type="button"><Icon name="save" />Speichern</ActionButton>
            <ActionButton type="button"><Icon name="apply" />Anwenden</ActionButton>
            <Spacer />
            <ActionButton type="button" $wide><Icon name="help" />Hilfe</ActionButton>
          </Actions>
        </Form>
      </Frame>
    </Dialog>
  </Overlay>
);

/* ---------- log drawer ---------- */

const Drawer = styled.div`
  display: flex;
  align-items: center;
  justify-content: flex-end;
  height: 46px;
  margin: 10px 8px;
  padding: 2px 7px 0;
  border: 2px solid ${softLine};
  background: #d2e0f2;
`;

const App = () => {
  const [auto, setAuto] = useState(true);
  return (
    <>
      <GlobalStyle />
      <Screen>
        <StatusBar>
          <StatusGroup>
            <span>iPad</span>
            <svg width="30" height="22" viewBox="0 0 30 22" aria-label="WLAN">
              <path d="M2 8.500C9 1 21 1 28 8.500" fill="none" stroke="#fff" strokeWidth="4" />
              <path d="M7.500 13.500c4-4 11-4 15 0" fill="none" stroke="#fff" strokeWidth="3.800" />
              <path d="M10.800 16.800L15 21l4.200-4.200c-2.300-2.200-6.100-2.200-8.400 0z" fill="#fff" />
            </svg>
          </StatusGroup>
          <DeviceClock>23:56</DeviceClock>
          <StatusGroup $end>
            <svg width="18" height="20" viewBox="0 0 18 20" aria-hidden="true">
              <path d="M7 0C-4 5-1 20 10 20c4 0 7-2 8-5C8 17 3 9 7 0z" fill="#666" />
            </svg>
            <svg width="20" height="22" viewBox="0 0 20 22" aria-hidden="true">
              <path d="M18 3L2 10.500l8 .8 1.500 8z" fill="none" stroke="#fff" strokeWidth="2" />
            </svg>
            <svg width="14" height="24" viewBox="0 0 14 24" aria-hidden="true">
              <path d="M1 7l11 10-5 5V2l5 5L1 17" fill="none" stroke="#fff" strokeWidth="2" />
            </svg>
            <Battery>
              78 %
              <svg width="53" height="24" viewBox="0 0 53 24" aria-hidden="true">
                <rect x="1" y="1" width="46" height="22" rx="4" fill="none" stroke="#8a8a8a" strokeWidth="2" />
                <rect x="4" y="4" width="32" height="16" fill="#fff" />
                <path d="M50 8q3 4 0 8z" fill="#8a8a8a" />
              </svg>
            </Battery>
          </StatusGroup>
        </StatusBar>
        <BrowserTabs />
        <AddressBar />
        <AppPage>
          <TabRow tabs={mainTabs} label="Hauptmenü">
            <SessionInfo>
              <span>Kein verifizierter Zugriff</span>
              <SessionLink href="#">(Anmelden)</SessionLink>
              <span>Speicherplatz: <b>0/0/0</b></span>
              <b>23:56:20</b>
            </SessionInfo>
          </TabRow>
          <TabRow tabs={configTabs} label="Konfiguration" />
          <TabRow tabs={inputTabs} label="DVB-Inputs" />
          <Panel>
            <Bar>
              <BarButton disabled><Icon name="save" />Speichern</BarButton>
              <BarButton disabled><Icon name="undo" />Rückgängig</BarButton>
              <Divider />
              <BarButton><Icon name="add" />Hinzufügen</BarButton>
              <BarButton><Icon name="remove" />Löschen</BarButton>
              <Divider />
              <BarButton $hot><Icon name="edit" />Bearbeiten</BarButton>
              <Divider />
              <BarButton><Icon name="scan" />Scan erzwingen</BarButton>
              <Spacer />
              <BarButton><Icon name="help" />Hilfe</BarButton>
            </Bar>
            <Grid>
              <colgroup>
                <FirstCol />
                <col />
                <CountCol />
                <CountCol />
                <CountCol />
                <CountCol />
                <EndCol />
              </colgroup>
              <thead>
                <tr>
                  <HeadCell $sorted>
                    <SortLabel>
                      Netzwerkname
                      <svg width="16" height="9" viewBox="0 0 16 9" aria-hidden="true">
                        <path d="M0 9h16L8 0z" fill="#6593cf" />
                      </svg>
                    </SortLabel>
                  </HeadCell>
                  <HeadCell />
                  <HeadCell># Muxe</HeadCell>
                  <HeadCell># Serv…</HeadCell>
                  <HeadCell># Zug…</HeadCell>
                  <HeadCell>Such…</HeadCell>
                  <HeadCell as="td" />
                </tr>
              </thead>
              <tbody>
                <tr>
                  <Cell $first>Astra 19.2</Cell>
                  <Cell />
                  <Cell />
                  <Cell>0</Cell>
                  <Cell>0</Cell>
                  <Cell $last>0</Cell>
                </tr>
              </tbody>
            </Grid>
            <Spacer />
            <Bar $foot>
              <PagerButton aria-label="Erste Seite"><Icon name="first" /></PagerButton>
              <PagerButton aria-label="Vorherige Seite"><Icon name="prev" /></PagerButton>
              <Divider />
              <Message as="label" htmlFor="page">Seite</Message>
              <PageNumber id="page" defaultValue="1" />
              <Message>von 1</Message>
              <Divider />
              <PagerButton aria-label="Nächste Seite"><Icon name="next" /></PagerButton>
              <PagerButton aria-label="Letzte Seite"><Icon name="last" /></PagerButton>
              <Divider />
              <PagerButton aria-label="Aktualisieren"><Icon name="refresh" /></PagerButton>
              <Divider />
              <Message as="label" htmlFor="auto">Automatische Aktualisierung</Message>
              <RefreshToggle>
                <DarkCheck id="auto" type="checkbox" checked={auto} onChange={() => setAuto(!auto)} />
                {auto && (
                  <svg width="34" height="34" viewBox="0 0 34 34" aria-hidden="true">
                    <path d="M7 19l6 7L26 8" fill="none" stroke="#111" strokeWidth="7" strokeLinejoin="round" />
                    <path d="M7 18l6 8L26 8" fill="none" stroke="#fff" strokeWidth="4" />
                  </svg>
                )}
              </RefreshToggle>
              <Spacer />
              <Message>Netzwerke 1 - 1 von 1</Message>
              <Divider />
              <Message as="label" htmlFor="size">Pro Seite</Message>
              <Combo id="size" value="50" compact />
            </Bar>
          </Panel>
          <Drawer>
            <Toggle aria-label="Protokoll einblenden">
              <svg width="16" height="18" viewBox="0 0 16 18" aria-hidden="true">
                <path d="M1 8l7-6 7 6M1 16l7-6 7 6" fill="none" stroke="#4a7ab5" strokeWidth="3" />
              </svg>
            </Toggle>
          </Drawer>
          <NetworkDialog />
        </AppPage>
      </Screen>
    </>
  );
};

export default App;
